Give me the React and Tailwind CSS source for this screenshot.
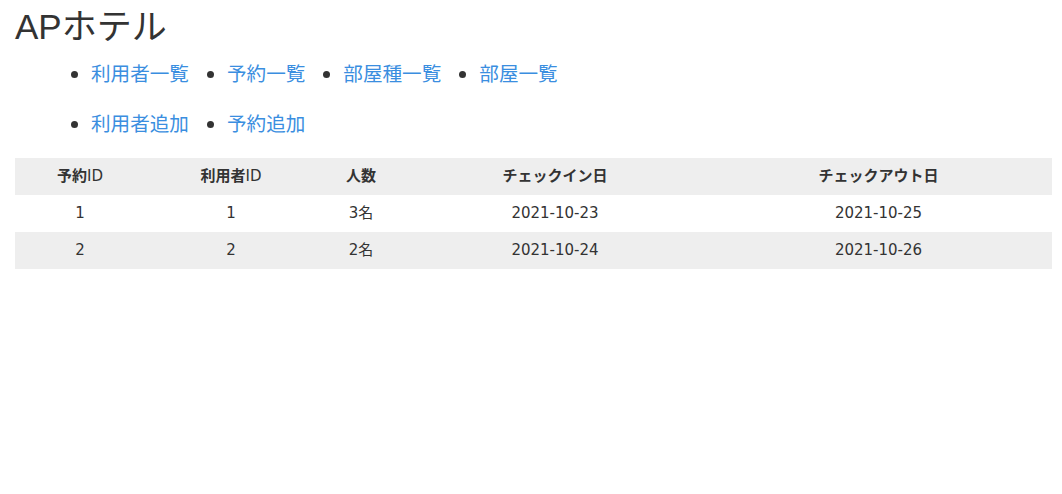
import React from 'react';

const menus = [
    ['利用者一覧', '予約一覧', '部屋種一覧', '部屋一覧'],
    ['利用者追加', '予約追加'],
];

const columns = [
    { label: '予約', suffix: 'ID', w: 'w-[130px]' },
    { label: '利用者', suffix: 'ID', w: 'w-[172px]' },
    { label: '人数', w: 'w-[88px]' },
    { label: 'チェックイン日', w: 'w-[300px]' },
    { label: 'チェックアウト日', w: 'w-[347px]' },
];

const reservations = [
    { id: 1, userId: 1, people: '3名', checkIn: '2021-10-23', checkOut: '2021-10-25' },
    { id: 2, userId: 2, people: '2名', checkIn: '2021-10-24', checkOut: '2021-10-26' },
];

export default function App() {
    return (
        <div className="min-h-[494px] bg-white px-[15px] pt-[5px] text-[#333]">
            <h1 className="text-[35px] leading-[44px] font-normal font-['Liberation_Sans','Noto_Sans_CJK_JP',sans-serif]">
                APホテル
            </h1>

            <div className="mt-[12px] pl-[56px] font-['Noto_Sans','Noto_Sans_CJK_JP',sans-serif]">
                {menus.map((items, i) => (
                    <ul key={i} className="flex items-center h-[26px] mb-[24px] last:mb-[21px]">
                        {items.map((label) => (
                            <li key={label} className="flex items-center mr-[18px]">
                                <span className="w-[7px] h-[7px] rounded-full bg-[#333] mr-[13px]" />
                                <a href="#" className="text-[19.6px] leading-[26px] text-[#3a8ee0]">
                                    {label}
                                </a>
                            </li>
                        ))}
                    </ul>
                ))}
            </div>

            <table className="w-[1037px] border-collapse text-[15px] font-['DejaVu_Sans','Noto_Sans_CJK_JP',sans-serif] text-[#333]">
                <thead>
                    <tr className="bg-[#eeeeee] h-[37px]">
                        {columns.map((c) => (
                            <th key={c.label} className={`${c.w} font-bold text-center`}>
                                {c.label}
                                {c.suffix && <span className="font-normal">{c.suffix}</span>}
                            </th>
                        ))}
                    </tr>
                </thead>
                <tbody>
                    {reservations.map((r, i) => (
                        <tr key={r.id} className={`h-[37px] ${i % 2 === 1 ? 'bg-[#eeeeee]' : 'bg-white'}`}>
                            <td className="text-center">{r.id}</td>
                            <td className="text-center">{r.userId}</td>
                            <td className="text-center">{r.people}</td>
                            <td className="text-center">{r.checkIn}</td>
                            <td className="text-center">{r.checkOut}</td>
                        </tr>
                    ))}
                </tbody>
            </table>
        </div>
    );
}
